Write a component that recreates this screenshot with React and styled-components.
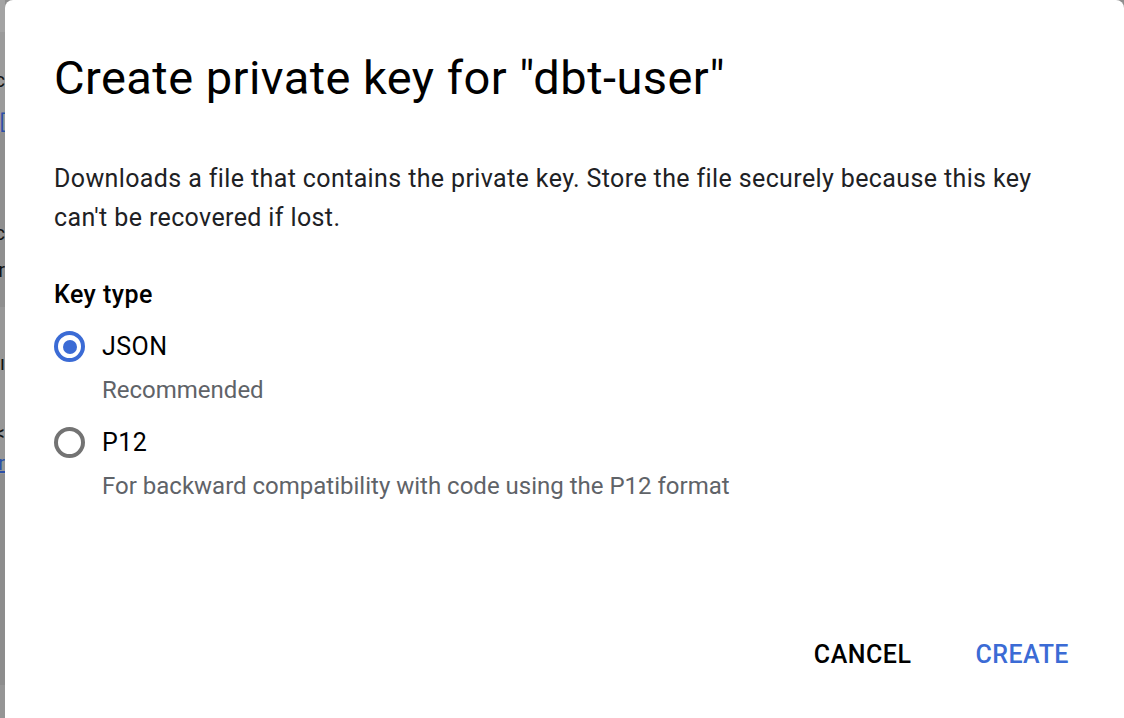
import React from "react";
import styled, { createGlobalStyle } from "styled-components";

const Global = createGlobalStyle`
  html, body { margin: 0; padding: 0; height: 100%; overflow: hidden; }
  body { font-family: Roboto, "Noto Sans", Arial, sans-serif; background: #8e8e8e; }
  #root { height: 100%; }
`;

const Page = styled.div`
  display: flex;
  height: 718px;
  width: 1124px;
  overflow: hidden;
`;

const Backdrop = styled.div`
  width: 5px;
  flex: 0 0 5px;
  display: flex;
  flex-direction: column;
  background: #8d8d8d;
  overflow: hidden;
`;

const Band = styled.div`
  height: ${(p) => p.$h}px;
  flex: 0 0 ${(p) => p.$h}px;
  background: ${(p) => p.$bg || "transparent"};
  display: flex;
  align-items: center;
  justify-content: flex-end;
  overflow: hidden;
  white-space: nowrap;
  font-size: 20px;
  line-height: 20px;
  color: ${(p) => p.$color || "#111"};
  text-decoration: ${(p) => (p.$link ? "underline" : "none")};
`;

const Dialog = styled.div`
  flex: 1;
  background: #fff;
  border-radius: 8px 8px 0 0;
  padding: 50px 49px 0 49px;
  display: flex;
  flex-direction: column;
  box-sizing: border-box;
`;

const Title = styled.h1`
  margin: 0;
  font-family: Roboto, sans-serif;
  font-weight: 400;
  font-size: 47px;
  letter-spacing: 0.45px;
  line-height: 56px;
  color: #000;
`;

const Body = styled.p`
  margin: 53px 0 0 0;
  font-size: 25px;
  letter-spacing: 0.38px;
  line-height: 39px;
  color: #202124;
  max-width: 1000px;
`;

const Label = styled.div`
  margin-top: 38px;
  font-size: 25px;
  letter-spacing: 0.45px;
  line-height: 39px;
  font-weight: 500;
  color: #000;
`;

const Option = styled.label`
  display: grid;
  grid-template-columns: 31px 1fr;
  column-gap: 17px;
  margin-top: ${(p) => p.$mt}px;
  cursor: pointer;
`;

const Radio = styled.span`
  width: 31px;
  height: 31px;
  box-sizing: border-box;
  border-radius: 50%;
  border: 4px solid ${(p) => (p.$checked ? "#3b6bd5" : "#737373")};
  align-self: center;
  display: flex;
  align-items: center;
  justify-content: center;
  &::after {
    content: "";
    width: 14px;
    height: 14px;
    border-radius: 50%;
    background: ${(p) => (p.$checked ? "#3b6bd5" : "transparent")};
  }
`;

const OptionText = styled.span`
  font-size: 25px;
  letter-spacing: 0.45px;
  line-height: 39px;
  color: #000;
`;

const Hint = styled.span`
  grid-column: 2;
  margin-top: 5px;
  font-size: 24px;
  line-height: 39px;
  color: #5f6368;
`;

const Spacer = styled.div`
  flex: 1;
`;

const Actions = styled.div`
  display: flex;
  justify-content: flex-end;
  margin-bottom: 44px;
  margin-right: 6px;
`;

const Button = styled.button`
  background: none;
  border: none;
  padding: 0;
  margin-left: ${(p) => p.$ml || 0}px;
  font-family: Roboto, sans-serif;
  font-size: 25px;
  font-weight: 500;
  letter-spacing: 0.5px;
  line-height: 39px;
  color: ${(p) => (p.$primary ? "#3b6bd5" : "#000")};
  cursor: pointer;
`;

const bands = [
  { h: 32, bg: "#a3a3a3" },
  { h: 38, bg: "#9b9b9b" },
  { h: 20, bg: "#9b9b9b", t: "c" },
  { h: 22, bg: "#9b9b9b" },
  { h: 20, bg: "#9b9b9b", t: "[", color: "#2b4fa8" },
  { h: 88, bg: "#8f8f8f" },
  { h: 26, bg: "#8f8f8f", t: "c" },
  { h: 12, bg: "#8f8f8f" },
  { h: 24, bg: "#8f8f8f", t: "r" },
  { h: 25, bg: "#8f8f8f" },
  { h: 43, bg: "#979797" },
  { h: 26, bg: "#979797", t: "ı" },
  { h: 44, bg: "#979797" },
  { h: 26, bg: "#979797", t: "<" },
  { h: 6, bg: "#979797" },
  { h: 22, bg: "#979797", t: "r", color: "#2b4fa8", link: true },
  { h: 211, bg: "#8d8d8d" },
  { h: 33, bg: "#959595" },
];

export default function App() {
  return (
    <>
      <Global />
      <Page>
        <Backdrop>
          {bands.map((b, i) => (
            <Band key={i} $h={b.h} $bg={b.bg} $color={b.color} $link={b.link}>
              {b.t}
            </Band>
          ))}
        </Backdrop>
        <Dialog>
          <Title>Create private key for "dbt-user"</Title>
          <Body>
            Downloads a file that contains the private key. Store the file securely because this key
            can't be recovered if lost.
          </Body>
          <Label>Key type</Label>
          <Option $mt={13}>
            <Radio $checked />
            <OptionText>JSON</OptionText>
            <Hint>Recommended</Hint>
          </Option>
          <Option $mt={13}>
            <Radio />
            <OptionText>P12</OptionText>
            <Hint>For backward compatibility with code using the P12 format</Hint>
          </Option>
          <Spacer />
          <Actions>
            <Button>CANCEL</Button>
            <Button $primary $ml={64}>CREATE</Button>
          </Actions>
        </Dialog>
      </Page>
    </>
  );
}
